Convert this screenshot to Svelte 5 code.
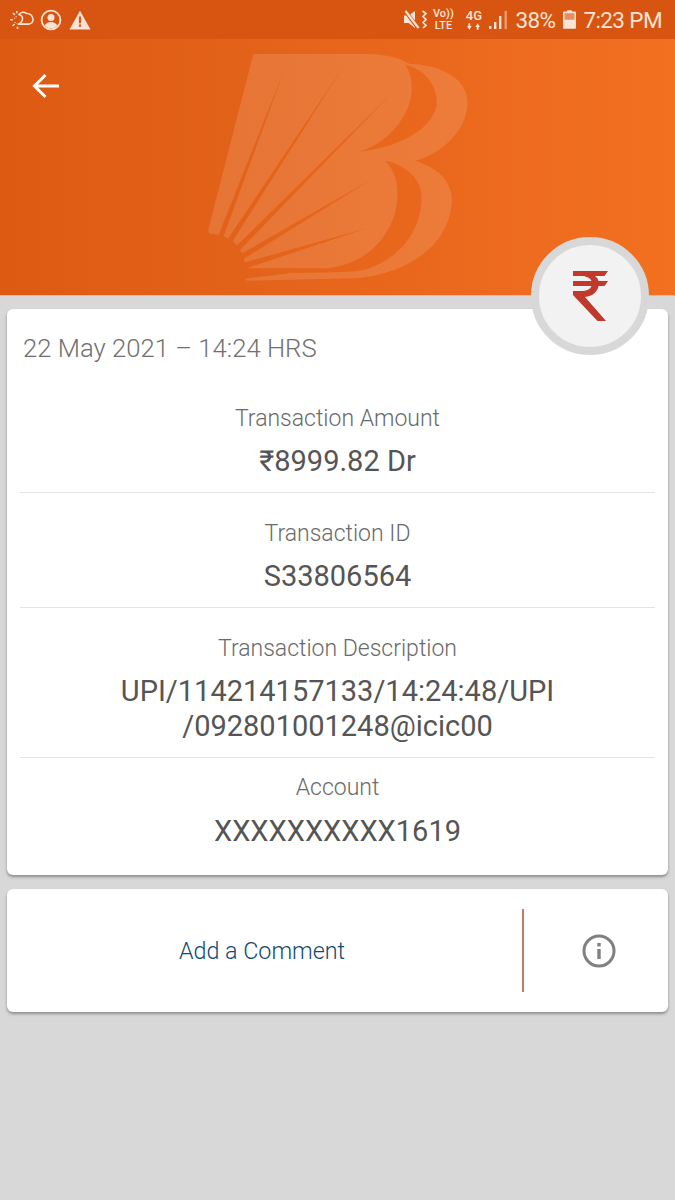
<script>
  const rows = [
    { label: 'Transaction Amount', value: ['₹8999.82 Dr'] },
    { label: 'Transaction ID', value: ['S33806564'] },
    { label: 'Transaction Description', value: ['UPI/114214157133/14:24:48/UPI', '/092801001248@icic00'] },
    { label: 'Account', value: ['XXXXXXXXXX1619'] }
  ];
</script>

<div class="page">
  <header class="hero">
    <div class="status">
      <div class="status-left">
        <svg class="ic-weather" viewBox="0 0 70 52" fill="none" stroke="#fbe3d6" stroke-width="4.500">
          <path d="M24 38H54C63 38 68 31 67 23 66 13 58 6 48 7 41 2 32 3 26 10" stroke-linecap="round" />
          <path d="M26 10C34 12 38 18 36 26 35 31 31 35 27 37" />
          <path d="M10 7l3 3M2 25h5M9 42l3-3M22 47v4M20 1v4" stroke-linecap="round" />
          <path d="M13 22a11 11 0 0 1 6-6M14 32a11 11 0 0 0 5 5" stroke-width="3" stroke-dasharray="3 3" />
        </svg>
        <svg class="ic-user" viewBox="0 0 22 22">
          <circle cx="11" cy="11" r="9.400" fill="none" stroke="#fbe3d6" stroke-width="1.800" />
          <circle cx="11" cy="8.500" r="3.500" fill="#fbe3d6" />
          <path d="M4.600 16.500c1.500-2.600 4-3.600 6.400-3.600s4.900 1 6.400 3.600a9 9 0 0 1-12.800 0z" fill="#fbe3d6" />
        </svg>
        <svg class="ic-warn" viewBox="0 0 22 20">
          <path d="M11 .8 21.500 19.500H.5z" fill="#fbe3d6" />
          <rect x="9.900" y="6.500" width="2.200" height="6.800" fill="#d9570f" />
          <rect x="9.900" y="14.500" width="2.200" height="2.300" fill="#d9570f" />
        </svg>
      </div>
      <div class="status-right">
        <svg class="ic-mute" viewBox="0 0 23 19" fill="#fbe3d6">
          <path d="M0 5.500h4.500L11 1v17l-6.500-5H0z" />
          <path d="M1 .5l13 17.500" stroke="#d75510" stroke-width="4" />
          <path d="M1.500 1l13 17" stroke="#fbe3d6" stroke-width="2.200" />
          <path d="M18.500 1l3.500 2.500-3 3 3 3-3 3 3 3-3 2.500" fill="none" stroke="#fbe3d6" stroke-width="1.600" />
        </svg>
        <div class="tiny volte"><span>Vo))</span><span>LTE</span></div>
        <div class="tiny net">
          <span class="four">4G</span>
          <svg class="arrows" viewBox="0 0 14 7" fill="#fbe3d6">
            <path d="M1.500 3V0h2v3H5L2.500 7 0 3zM10.500 4v3h2V4H14L11.500 0 9 4z" />
          </svg>
        </div>
        <svg class="ic-signal" viewBox="0 0 18 20">
          <rect x="0" y="16" width="2.400" height="3" fill="#fbe3d6" />
          <rect x="5" y="12" width="2.400" height="7" fill="#fbe3d6" />
          <rect x="10" y="6" width="2.400" height="13" fill="#fbe3d6" />
          <rect x="15.500" y="1" width="2.400" height="18" fill="#ee9a6a" />
        </svg>
        <span class="pct">38%</span>
        <svg class="ic-batt" viewBox="0 0 14 20">
          <path d="M4.500 0h5v1.500H13a1 1 0 0 1 1 1V19a1 1 0 0 1-1 1H1a1 1 0 0 1-1-1V2.500a1 1 0 0 1 1-1h3.500z" fill="#fbe3d6" />
          <rect x="1.700" y="3.200" width="10.600" height="7" fill="#e58e62" />
        </svg>
        <span class="time">7:23 PM</span>
      </div>
    </div>

    <svg class="logo" viewBox="0 0 900 780" aria-hidden="true">
      <defs>
        <mask id="bcut">
          <path fill="#fff" d="M190 42 L530 42 C590 42 630 55 660 72 C760 75 832 120 832 185 C835 265 760 340 675 362 C750 385 790 430 785 490 C775 620 650 700 500 715 L172 722 L165 716 L300 700 L172 685 L160 650 L148 622 L122 600 L95 585 L62 582 Q52 578 56 565 Z" />
          <path fill="#000" d="M660 78 C720 100 742 150 740 190 C735 260 640 320 510 335 C590 310 665 230 665 145 C665 115 660 95 645 75 Z" />
          <path fill="#000" d="M585 362 C650 375 695 420 695 470 C695 570 630 660 520 690 C480 700 300 698 172 700 L172 685 L400 685 C530 680 618 580 622 470 C625 425 610 385 585 362 Z" />
          <path fill="#000" d="M285 85 L100 590 L86 584 Z" />
          <path fill="#000" d="M460 80 L127 605 L114 596 Z" />
          <path fill="#000" d="M610 155 L152 628 L140 617 Z" />
          <path fill="#000" d="M550 415 L162 656 L153 642 Z" />
          <path fill="#000" d="M530 565 L172 684 L162 668 Z" />
        </mask>
      </defs>
      <rect width="900" height="780" fill="#fff" fill-opacity="0.125" mask="url(#bcut)" />
    </svg>

    <svg class="back" viewBox="0 0 28 26" fill="none" stroke="#fff" stroke-width="3">
      <path d="M27 13H3M13.500 2 2.500 13l11 11" />
    </svg>
  </header>

  <main class="content">
    <div class="badge">
      <svg viewBox="0 0 36 50" fill="#c0392b">
        <path d="M1 0H36L32.500 5H23C25 6.500 26 8 26.500 10H36L32.500 15H26.500C25.500 21 20.500 25 13 26L34 50H25.500L1 24V20H9C14 20 18 19 19.500 15H1V10H19.500C18 6.500 14 5 9 5H1Z" />
      </svg>
    </div>

    <section class="card details">
      <p class="date">22 May 2021 – 14:24 HRS</p>
      {#each rows as row, i}
        <div class="row" class:last={i === rows.length - 1}>
          <p class="label">{row.label}</p>
          <p class="value">{#each row.value as line}<span>{line}</span>{/each}</p>
        </div>
      {/each}
    </section>

    <section class="card comment">
      <div class="add">Add a Comment</div>
      <div class="sep"></div>
      <div class="info">
        <svg viewBox="0 0 34 34" fill="none">
          <circle cx="17" cy="17" r="15" stroke="#808080" stroke-width="3" />
          <rect x="15.300" y="15" width="3.400" height="10" fill="#808080" />
          <rect x="15.300" y="9" width="3.400" height="3.400" fill="#808080" />
        </svg>
      </div>
    </section>
  </main>
</div>

<style>
  :global(body) {
    margin: 0;
    background: #d8d8d8;
  }
  .page {
    width: 675px;
    height: 1200px;
    overflow: hidden;
    background: #d8d8d8;
    font-family: Roboto, "Liberation Sans", sans-serif;
  }
  p {
    margin: 0;
  }
  .hero {
    position: relative;
    box-sizing: border-box;
    height: 296px;
    background: linear-gradient(90deg, #dd5a12 0%, #e3621a 35%, #f37021 100%);
    border-bottom: 1px solid #e9b794;
  }
  .status {
    height: 39px;
    background: #d75510;
    display: flex;
    justify-content: space-between;
    align-items: center;
    padding: 0 13px 0 10px;
    color: #fbe3d6;
  }
  .status-left,
  .status-right {
    display: flex;
    align-items: center;
  }
  .ic-weather {
    width: 24px;
    height: 18px;
    margin-right: 6px;
  }
  .ic-user {
    width: 22px;
    height: 22px;
    margin-right: 7px;
  }
  .ic-warn {
    width: 22px;
    height: 20px;
  }
  .ic-mute {
    width: 23px;
    height: 19px;
    margin-right: 6px;
  }
  .tiny {
    display: flex;
    flex-direction: column;
    font-size: 11px;
    font-weight: 500;
    line-height: 12px;
    align-items: center;
  }
  .volte {
    width: 20px;
    margin-right: 12px;
  }
  .net {
    width: 17px;
    margin-right: 7px;
  }
  .four {
    font-size: 13px;
    line-height: 12px;
  }
  .arrows {
    width: 13px;
    height: 7px;
    margin-top: 1px;
  }
  .ic-signal {
    width: 18px;
    height: 20px;
    margin-right: 8px;
  }
  .pct,
  .time {
    font-size: 22.500px;
    line-height: 24px;
    letter-spacing: -0.6px;
  }
  .ic-batt {
    width: 13px;
    height: 19px;
    margin: 0 7px 0 8px;
  }
  .logo {
    position: absolute;
    left: 190px;
    top: 40px;
    width: 300px;
    height: 260px;
  }
  .back {
    position: absolute;
    left: 32px;
    top: 73px;
    width: 28px;
    height: 26px;
  }
  .content {
    position: relative;
    padding: 13px 7px 0;
  }
  .badge {
    position: absolute;
    z-index: 2;
    top: -59px;
    left: 531px;
    width: 118px;
    height: 118px;
    box-sizing: border-box;
    border-radius: 50%;
    background: #f2f2f2;
    border: 8px solid #d8d8d8;
    display: flex;
    align-items: center;
    justify-content: center;
  }
  .badge svg {
    width: 36px;
    height: 52px;
  }
  .card {
    background: #fff;
    border-radius: 6px;
    box-shadow: 0 2px 3px rgba(0, 0, 0, 0.35);
  }
  .details {
    height: 566px;
    box-sizing: border-box;
    padding: 24px 13px 0;
    margin-bottom: 14px;
    text-align: center;
  }
  .date {
    text-align: left;
    padding-left: 3px;
    font-size: 25.700px;
    font-weight: 300;
    line-height: 30px;
    height: 45px;
    color: #707070;
  }
  .row {
    border-bottom: 1px solid #e4e4e4;
    padding: 27px 0 13px;
  }
  .row.last {
    border-bottom: 0;
    padding-top: 16px;
  }
  .row.last .label {
    margin-bottom: 13px;
  }
  .label {
    font-size: 23px;
    font-weight: 300;
    line-height: 27px;
    margin-bottom: 12px;
    color: #6a6a6a;
  }
  .value {
    font-size: 29px;
    line-height: 35px;
    color: #555;
  }
  .value span {
    display: block;
  }
  .comment {
    height: 123px;
    display: flex;
    align-items: center;
  }
  .add {
    flex: 0 0 515px;
    padding-right: 5px;
    box-sizing: border-box;
    text-align: center;
    color: #0f4a75;
    font-size: 23.300px;
    font-weight: 300;
  }
  .sep {
    width: 2px;
    height: 83px;
    background: #c17d6a;
  }
  .info {
    flex: 1;
    display: flex;
    justify-content: center;
    padding-left: 6px;
  }
  .info svg {
    width: 34px;
    height: 34px;
  }
</style>
